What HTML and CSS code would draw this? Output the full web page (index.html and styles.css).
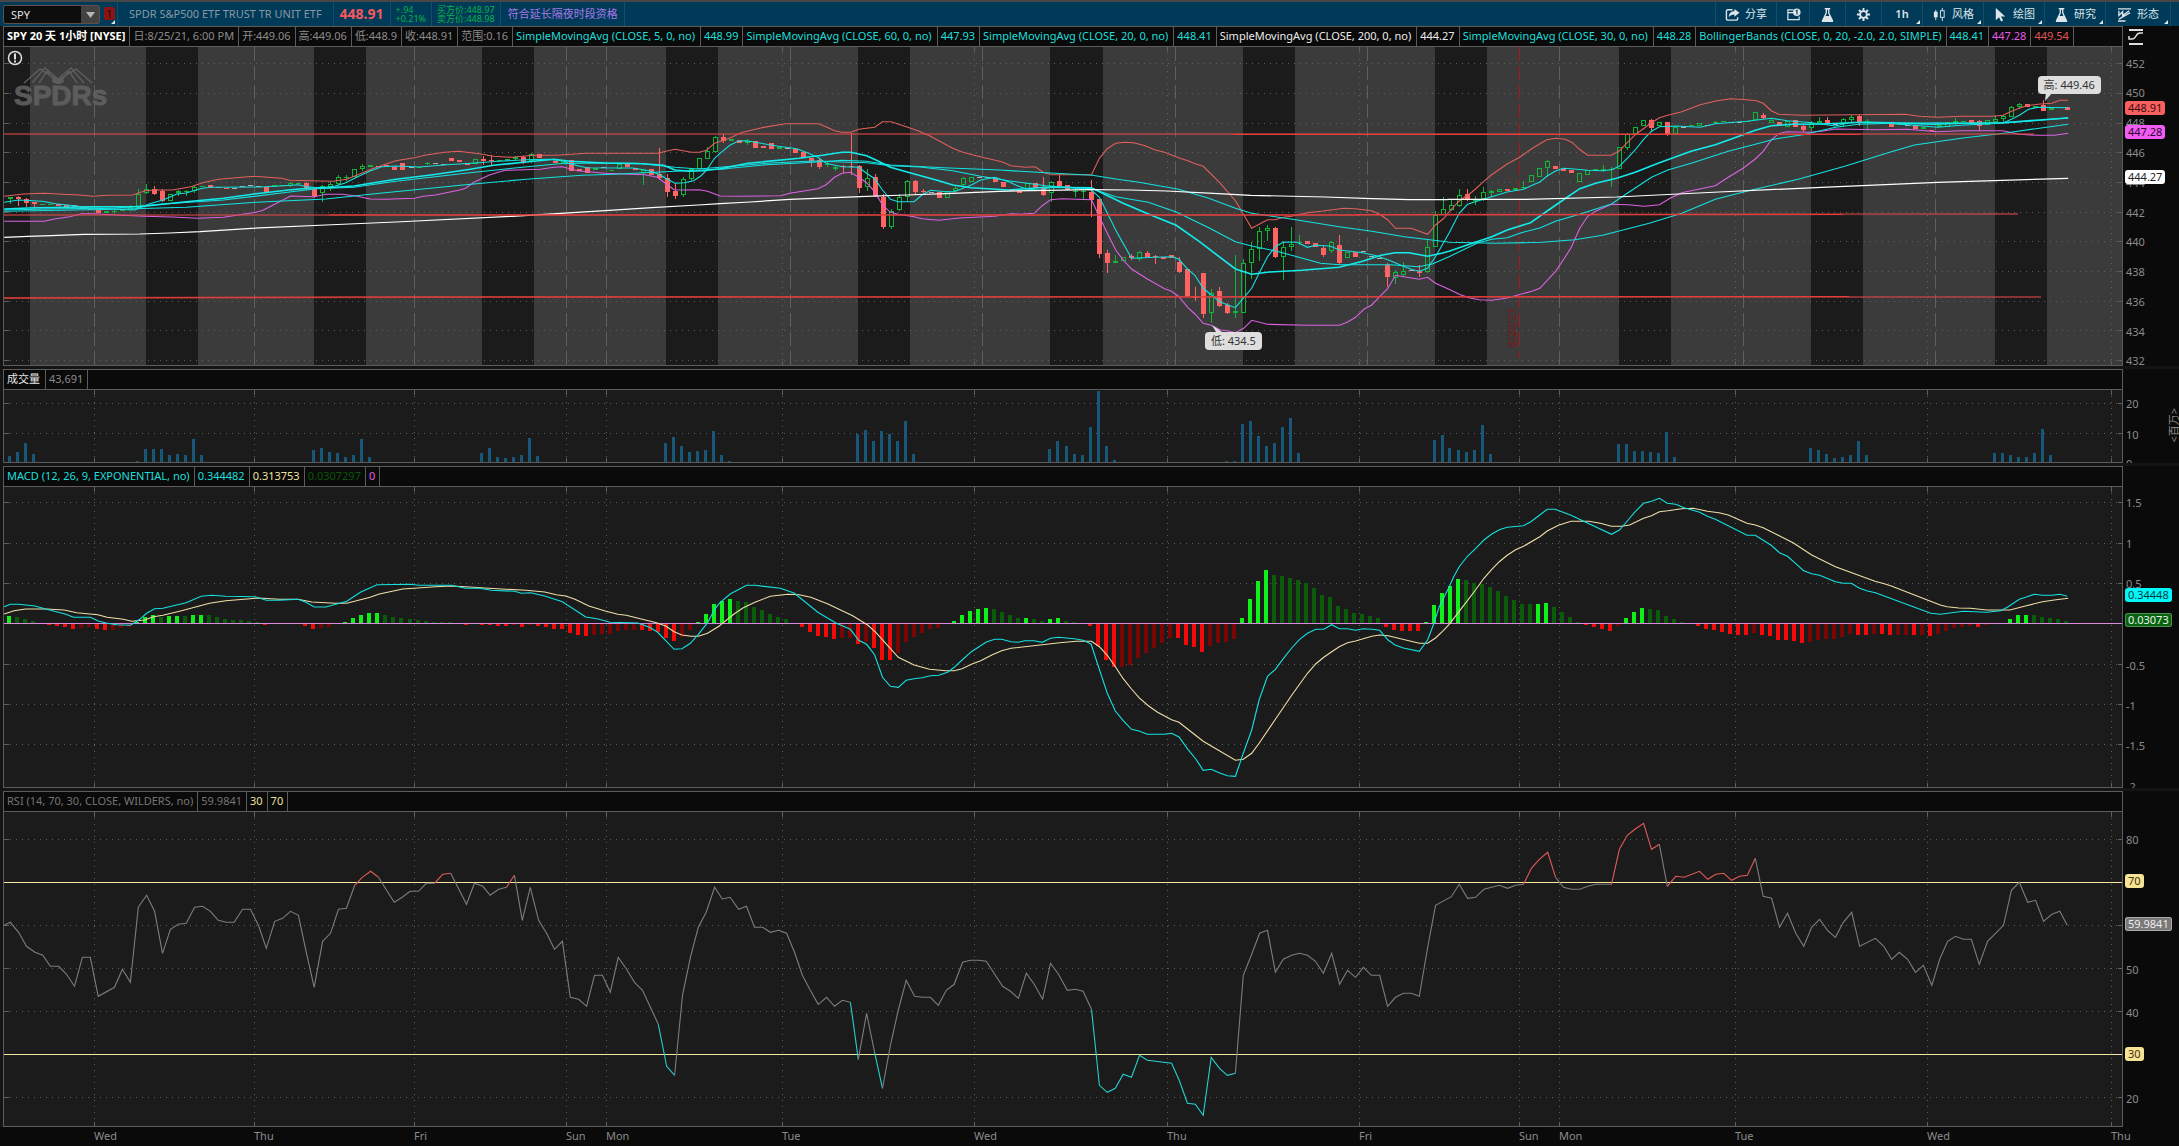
FILE: index.html
```html
<!DOCTYPE html>
<html lang="zh-CN">
<head>
<meta charset="utf-8">
<title>SPY 20 天 1小时</title>
<link rel="stylesheet" href="styles.css">
</head>
<body>
<header class="toolbar">
  <div class="symbol">
    <input class="symbol-input" type="text" value="SPY" aria-label="代码">
    <button class="symbol-arrow" type="button" aria-label="展开"><svg width="9" height="6" viewBox="0 0 9 6"><path d="M0 0h9L4.500 6z" fill="#b5b5b5"/></svg></button>
  </div>
  <div class="link more"><button class="link-badge" type="button">1</button></div>
  <div class="quote name">SPDR S&amp;P500 ETF TRUST TR UNIT ETF</div>
  <div class="quote last">448.91</div>
  <div class="quote pair change"><span>+.94</span><span>+0.21%</span></div>
  <div class="quote pair bidask"><span>买方价:448.97</span><span>卖方价:448.98</span></div>
  <div class="quote session">符合延长隔夜时段资格</div>
  <nav class="tools">
    <button class="tool wide" type="button"><svg class="icon" viewBox="0 0 16 16"><path d="M8 3H3a1.500 1.500 0 0 0-1.500 1.500v8A1.500 1.500 0 0 0 3 14h9a1.500 1.500 0 0 0 1.500-1.500V11" fill="none" stroke="#dde5ea" stroke-width="1.500"/><path d="M4 11c.3-4.500 2.500-6.500 6-6.500V2l5.500 4.200L10 10.500V8C7.500 8 5.500 8.800 4 11z" fill="#dde5ea"/></svg>分享</button>
    <button class="tool slim" type="button" aria-label="提醒"><svg class="icon" viewBox="0 0 16 16"><path d="M8 3H2v10.500h12V10M2 6h6" fill="none" stroke="#dde5ea" stroke-width="1.300"/><circle cx="11.500" cy="5.500" r="4" fill="#dde5ea"/><path d="M10.500 4.300l1.200-.8V8" fill="none" stroke="#003a59" stroke-width="1.200"/></svg></button>
    <button class="tool mid" type="button" aria-label="实验"><svg class="icon" viewBox="0 0 16 16"><path d="M5 1h6v1.500h-1V6l4 8.500V16H2v-1.500L6 6V2.500H5z" fill="#dde5ea"/><path d="M7.400 3v3.500L6 9.500h4L8.600 6.500V3z" fill="#003a59"/></svg></button>
    <button class="tool mid" type="button" aria-label="设置"><svg class="icon" viewBox="0 0 16 16"><path d="M8 1v14M1 8h14M3.200 3.200l9.600 9.600M12.800 3.200l-9.600 9.600" stroke="#dde5ea" stroke-width="2"/><circle cx="8" cy="8" r="4.500" fill="#dde5ea"/><circle cx="8" cy="8" r="2.600" fill="#003a59"/></svg></button>
    <button class="tool period more" type="button">1h</button>
    <button class="tool wide more" type="button"><svg class="icon" viewBox="0 0 16 16"><path d="M4 3v11M11 1v14" stroke="#dde5ea"/><rect x="2" y="5" width="4" height="6" fill="#dde5ea"/><rect x="9" y="4" width="4" height="7" fill="#003a59" stroke="#dde5ea"/></svg>风格</button>
    <button class="tool wide more" type="button"><svg class="icon" viewBox="0 0 16 16"><path d="M3 1l10 9H8.500l2.300 4.500-2.200 1L6.500 11 3 14z" fill="#dde5ea"/></svg>绘图</button>
    <button class="tool wide more" type="button"><svg class="icon" viewBox="0 0 16 16"><path d="M5 1h6v1.500h-1V6l4 8.500V16H2v-1.500L6 6V2.500H5z" fill="#dde5ea"/><path d="M7.400 3v3.500L6 9.500h4L8.600 6.500V3z" fill="#003a59"/></svg>研究</button>
    <button class="tool widest more" type="button"><svg class="icon" viewBox="0 0 16 16"><path d="M1 2h14M1 15h8" stroke="#dde5ea" stroke-width="1.500"/><path d="M2 4v5l4-4v4l7-5M2 13L14 6" fill="none" stroke="#dde5ea" stroke-width="1.400"/></svg>形态</button>
  </nav>
</header>

<main class="charts">
  <section class="pane price">
    <div class="legend">
      <b class="cell title">SPY 20 天 1小时 [NYSE]</b><span class="cell">日:8/25/21, 6:00 PM</span><span class="cell">开:449.06</span><span class="cell">高:449.06</span><span class="cell">低:448.9</span><span class="cell">收:448.91</span><span class="cell">范围:0.16</span><span class="cell study cyan">SimpleMovingAvg (CLOSE, 5, 0, no)</span><span class="cell cyan">448.99</span><span class="cell study cyan">SimpleMovingAvg (CLOSE, 60, 0, no)</span><span class="cell cyan">447.93</span><span class="cell study cyan">SimpleMovingAvg (CLOSE, 20, 0, no)</span><span class="cell cyan">448.41</span><span class="cell study white">SimpleMovingAvg (CLOSE, 200, 0, no)</span><span class="cell white">444.27</span><span class="cell study cyan">SimpleMovingAvg (CLOSE, 30, 0, no)</span><span class="cell cyan">448.28</span><span class="cell cyan">BollingerBands (CLOSE, 0, 20, -2.0, 2.0, SIMPLE)</span><span class="cell cyan">448.41</span><span class="cell magenta">447.28</span><span class="cell red">449.54</span>
    </div>
    <button class="scale-button" type="button" aria-label="坐标"><svg width="16" height="18" viewBox="0 0 16 18"><path d="M1 2h14M1 16h14" stroke="#ddd" stroke-width="2"/><path d="M1 8v3h3c5 0 3-6 8-6h3" fill="none" stroke="#ddd" stroke-width="1.500"/></svg></button>
    <div class="plot" id="price-plot">
      <div class="logo"><svg width="70" height="17" viewBox="0 0 70 17"><path d="M33 12L17 2 1 16M34 11L22 1 9 16M37 12L53 2 69 16M36 11L48 1 61 16M31 13L24 4 16 16M39 13L46 4 54 16" fill="none" stroke="#606060" stroke-width="1.500"/><ellipse cx="35" cy="14" rx="6" ry="3" fill="#606060"/></svg><span>SPDRs</span></div>
      <svg class="info" width="16" height="16" viewBox="0 0 16 16"><circle cx="8" cy="8" r="6.500" fill="none" stroke="#ddd" stroke-width="1.500"/><path d="M8 3.500v6M8 10.500v2" stroke="#ddd" stroke-width="2"/></svg>
      <span class="callout high">高: 449.46</span>
      <span class="callout low">低: 434.5</span>
      <span class="expiry">8/20/21</span>
    </div>
    <div class="axis" id="price-axis"></div>
  </section>
  <section class="pane volume">
    <div class="legend"><span class="cell study bright">成交量</span><span class="cell">43,691</span></div>
    <div class="plot" id="volume-plot"></div>
    <div class="axis" id="volume-axis"><span class="unit">&lt;百万&gt;</span></div>
  </section>
  <section class="pane macd">
    <div class="legend"><span class="cell cyan">MACD (12, 26, 9, EXPONENTIAL, no)</span><span class="cell cyan">0.344482</span><span class="cell cream">0.313753</span><span class="cell green">0.0307297</span><span class="cell magenta">0</span></div>
    <div class="plot" id="macd-plot"></div>
    <div class="axis" id="macd-axis"></div>
  </section>
  <section class="pane rsi">
    <div class="legend"><span class="cell dim">RSI (14, 70, 30, CLOSE, WILDERS, no)</span><span class="cell dim">59.9841</span><span class="cell cream">30</span><span class="cell cream">70</span></div>
    <div class="plot" id="rsi-plot"></div>
    <div class="axis" id="rsi-axis"></div>
  </section>
</main>
<footer class="days" id="days"></footer>
<script src="chart.js"></script>
</body>
</html>
```
FILE: styles.css
```css
* { box-sizing: border-box; }

body {
  margin: 0;
  min-height: 100vh;
  display: flex;
  flex-direction: column;
  background: #0a0a0a;
  border-top: 2px solid #474747;
  color: #8c8c8c;
  font: 11px/18px "Noto Sans", "Noto Sans CJK SC", sans-serif;
}

button, input { font: inherit; color: inherit; margin: 0; padding: 0; border: 0; background: none; }
svg { display: block; }

.toolbar { display: flex; flex: none; height: 24px; background: #003a59; padding: 0 8px 0 3px; white-space: nowrap; }
.symbol { display: flex; align-items: center; width: 97px; height: 19px; margin: 3px 3px 0 0; background: #0d0d0d; border: 1px solid #5d5148; border-radius: 2px; }
.symbol-input { flex: 1; min-width: 0; padding-left: 7px; color: #e0e0e0; }
.symbol-arrow { width: 18px; height: 17px; background: #424242; display: flex; align-items: center; justify-content: center; }
.link { position: relative; width: 14px; padding: 5px 0 0 1px; }
.link-badge { display: block; width: 11px; height: 13px; border-radius: 2px; background: #8c1414; color: #2c0505; line-height: 13px; }
.quote { display: flex; align-items: center; border-left: 1px solid #174c69; padding: 0 6px; }
.name { padding: 0 11px; color: #8798a2; }
.last { font-size: 14px; font-weight: 700; color: #f4595d; }
.pair { flex-direction: column; align-items: flex-start; justify-content: center; font-size: 9px; line-height: 9px; color: #0ab544; padding: 0 5px; }
.session { padding-left: 7px; color: #a679e6; border-right: 1px solid #174c69; }
.tools { display: flex; margin-left: auto; border-right: 1px solid #174c69; }
.tool { position: relative; display: flex; align-items: center; justify-content: center; gap: 5px; border-left: 1px solid #174c69; color: #dde5ea; }
.wide { width: 61px; }
.widest { width: 65px; }
.slim { width: 33px; }
.mid { width: 36px; }
.period { width: 41px; font-weight: 600; }
.icon { width: 15px; height: 15px; }
.more::after { content: ""; position: absolute; right: 2px; bottom: 2px; border: 2px solid #dde5ea; border-top-color: transparent; border-left-color: transparent; }

.charts { flex: 1; display: flex; flex-direction: column; gap: 3px; padding-left: 3px; background: #141414; }
.pane { display: grid; grid-template-columns: minmax(0, 1fr) 56px; grid-template-rows: 21px minmax(0, 1fr); min-height: 60px; background: #0a0a0a; }
.price { flex: 318 1 22px; }
.volume { flex: 72 1 22px; }
.macd { flex: 300 1 22px; }
.rsi { flex: 314 1 22px; }

.legend { grid-column: 1; display: flex; overflow: hidden; white-space: nowrap; border: 1px solid #5c5c5c; }
.cell { flex: none; border-right: 1px solid #5c5c5c; padding: 0 4px 0 3px; }
.study { padding-right: 5px; }
.title { color: #fff; }
.bright { color: #e8e8e8; }
.white { color: #ececec; }
.dim { color: #757575; }
.cyan { color: #1fdedb; }
.magenta { color: #e25ce8; }
.red { color: #e05656; }
.cream { color: #efe0a0; }
.green { color: #0b560b; }
.scale-button { grid-column: 2; padding-left: 5px; }

.plot { grid-column: 1; position: relative; overflow: hidden; background: #1b1b1b; border: solid #5c5c5c; border-width: 0 1px 1px; }
.plot > .canvas { position: absolute; inset: 0; width: 100%; height: 100%; }
.canvas path, .canvas line { vector-effect: non-scaling-stroke; fill: none; }
.canvas .solid { fill: currentColor; }

.axis { grid-column: 2; position: relative; overflow: hidden; }
.tick { position: absolute; left: 3px; transform: translateY(-50%); }
.tag { position: absolute; left: 2px; transform: translateY(-50%); padding: 0 3px; border-radius: 3px; line-height: 14px; z-index: 1; }
.tag-red { background: #fa5f5f; color: #3a1010; }
.tag-magenta { background: #f25cf5; color: #2b062c; }
.tag-white { background: #fff; color: #222; }
.tag-cyan { background: #00f8f8; color: #043c3c; }
.tag-green { background: #0a6110; color: #e8f5e8; box-shadow: inset 0 0 0 1px #4d8f50; }
.tag-cream { background: #f7e394; color: #3c3510; }
.tag-gray { background: #787878; color: #eee; box-shadow: inset 0 0 0 1px #aaa; }
.unit { position: absolute; right: -2px; top: 18px; line-height: 14px; writing-mode: vertical-rl; text-orientation: sideways; transform: rotate(180deg); white-space: nowrap; }

.logo { position: absolute; left: 10px; top: 20px; z-index: 1; color: #606060; font: 700 28px/24px "Liberation Sans", sans-serif; -webkit-text-stroke: 1px #606060; opacity: .9; }
.logo svg { margin-left: 9px; }
.logo span { display: block; }
.info { position: absolute; left: 3px; top: 3px; z-index: 1; }
.callout { position: absolute; z-index: 2; padding: 0 6px; border-radius: 4px; background: #dedede; color: #333; }
.high { right: 1%; top: 9%; }
.low { left: 56.700%; top: 89.500%; }
.expiry { position: absolute; z-index: 1; left: 70.900%; top: 82%; line-height: 12px; writing-mode: vertical-rl; transform: rotate(180deg); color: #7a1818; }

.days { position: relative; flex: none; height: 19px; margin: 0 57px 0 4px; }
.day { position: absolute; }
```
FILE: chart.js
```js
// Drawing space shared by all panes: x 4..2122, y counted from the window top.
const LEFT = 4, WIDTH = 2118;
const CYAN = '#14e2e2', GRID = '#5f5f5f';
const SVG = 'http://www.w3.org/2000/svg';

// Series are stored in three consecutive chunks, each on its own fine grid.
const CHUNK_X = [0, 720, 1449];
const px = (c, x) => (CHUNK_X[c] + x / 2.148).toFixed(1);
const barX = i => 10.3 + 8.004 * i;

function pane(id, top, height) {
  const svg = document.createElementNS(SVG, 'svg');
  svg.setAttribute('class', 'canvas');
  svg.setAttribute('viewBox', `${LEFT} ${top} ${WIDTH} ${height}`);
  svg.setAttribute('preserveAspectRatio', 'none');
  document.getElementById(id + '-plot').prepend(svg);
  const axis = document.getElementById(id + '-axis');
  const label = (text, y, cls) => {
    const s = document.createElement('span');
    s.className = cls || 'tick';
    s.textContent = text;
    s.style.top = ((y - top) / height * 100).toFixed(2) + '%';
    axis.append(s);
  };
  let out = '';
  return {
    top, bottom: top + height, label,
    rect(x, y, w, h, fill) { out += `<rect x="${x}" y="${y}" width="${w}" height="${h}" fill="${fill}"/>`; },
    path(d, color, width = 1, extra = '') { out += `<path d="${d}" stroke="${color}" stroke-width="${width}" ${extra}/>`; },
    crisp(d, color, extra = '') { this.path(d, color, 1, 'shape-rendering="crispEdges" ' + extra); },
    raw(s) { out += s; },
    done() { svg.innerHTML = out; }
  };
}

function points(chunks, dy) {
  return chunks.map((s, c) => s.trim().split(/\s+/).filter(Boolean).map(p => {
    const [x, y] = p.split(',').map(Number);
    return [px(c, x), (dy + y / 3).toFixed(1)];
  })).flat();
}
const series = (chunks, dy) => 'M' + points(chunks, dy).map(p => p.join(' ')).join('L');

const DAYS = [[94, 'Wed'], [254, 'Thu'], [414, 'Fri'], [566, 'Sun'], [606, 'Mon'], [782, 'Tue'], [974, 'Wed'],
  [1167, 'Thu'], [1359, 'Fri'], [1519, 'Sun'], [1559, 'Mon'], [1735, 'Tue'], [1927, 'Wed'], [2111, 'Thu']];

function grid(p, levels, columns) {
  for (const y of levels) {
    p.crisp(`M${LEFT} ${y}.5H${LEFT + WIDTH}`, GRID, 'stroke-dasharray="1 5"');
    p.crisp(`M${LEFT} ${y}.5h5M${LEFT + WIDTH - 4} ${y}.5h4`, GRID);
  }
  for (const x of columns) {
    p.crisp(`M${x}.5 ${p.top}V${p.bottom}`, GRID, 'stroke-dasharray="1 5"');
    p.crisp(`M${x}.5 ${p.top}v5M${x}.5 ${p.bottom - 4}v4`, GRID);
  }
}

/* ---------- price ---------- */
{
  const p = pane('price', 47, 318);
  p.rect(4, 47, 2118, 318, '#3b3b3b');
  [[4, 30], [146, 198], [314, 366], [482, 534], [666, 718], [858, 910], [1050, 1103], [1243, 1295], [1435, 1487],
    [1619, 1671], [1811, 1863], [1995, 2047]].forEach(([a, b]) => p.rect(a, 47, b - a, 318, '#1b1b1b'));
  grid(p, [63, 93, 123, 152, 182, 212, 241, 271, 301, 330, 360], [782, 974, 1167, 1359, 1735, 1927, 2111]);
  [94, 254, 414, 566, 606, 790, 982, 1175, 1367, 1559, 1743, 1935].forEach(x => p.crisp(`M${x}.5 47V365`, '#606060', 'stroke-dasharray="14 5"'));
  p.crisp('M1519.500 47V358', '#a81818', 'stroke-dasharray="14 5"');

  // Bollinger bands
  const upper = ['9,319 50,312 95,310 135,313 170,315 200,319 230,316 285,315 310,303 330,300 370,300 410,290 435,278 470,268 545,259 605,265 622,271 715,274 745,268 800,236 850,212 890,203 915,195 955,187 985,184 1030,191 1060,199 1100,202 1145,196 1195,196 1260,190 1414,190 1430,184 1450,178 1485,187 1502,187 1517,181 1535,160',
    '10,150 25,142 45,128 90,113 140,101 212,101 230,112 246,122 262,127 281,127 298,118 332,112 349,95 368,95 400,110 425,122 450,137 470,152 500,175 520,186 550,197 605,215 625,227 655,232 677,230 694,247 712,254 798,254 815,205 832,176 850,160 870,157 888,158 910,166 935,180 955,187 985,203 1005,212 1022,222 1038,229 1073,277 1107,332 1142,415 1176,389 1193,389 1210,382 1228,379 1262,368 1296,363 1340,355 1365,356 1400,362 1417,373 1434,389 1451,415 1485,415 1520,433 1537,405 1555,385',
    '0,366 20,335 50,305 75,274 90,256 125,222 150,203 180,174 210,149 230,145 250,148 265,158 280,178 298,196 349,196 366,182 383,158 400,134 435,98 452,83 470,76 500,65 540,44 575,32 605,26 640,29 660,32 675,40 692,62 708,73 760,76 980,73 1010,79 1050,82 1100,79 1170,79 1190,76 1208,64 1225,55 1240,47 1270,42 1295,40 1312,31 1330,31'];
  const lower = ['9,394 95,394 120,386 150,380 175,371 200,371 250,375 310,379 370,381 425,385 480,382 550,367 565,361 590,343 624,318 675,320 700,313 735,313 765,318 795,327 830,328 890,325 910,319 935,315 985,301 1000,295 1019,276 1050,256 1070,247 1085,241 1160,238 1190,232 1208,230 1240,242 1300,250 1385,254 1412,262 1425,275 1448,299 1470,300 1502,299 1520,304 1540,314',
    '0,318 45,319 130,317 150,310 210,296 228,284 246,262 262,250 280,247 298,262 315,278 332,305 349,345 366,367 383,373 417,380 434,386 470,391 515,384 590,379 625,371 645,373 675,370 692,347 710,329 735,326 798,329 815,380 832,430 850,480 866,510 884,537 918,567 955,596 970,604 986,620 1005,653 1020,672 1038,700 1055,706 1075,720 1090,722 1107,728 1125,715 1142,691 1176,703 1262,706 1331,706 1348,696 1365,682 1383,658 1400,645 1417,620 1434,596 1451,556 1468,560 1502,568 1520,562 1537,580',
    '0,598 22,613 45,624 65,629 92,631 125,624 150,614 180,603 195,595 229,544 250,500 262,473 281,415 298,379 315,364 349,343 385,344 420,349 452,344 475,325 500,308 540,296 572,287 600,262 630,236 658,207 675,184 692,150 708,131 725,125 775,127 800,124 830,117 915,119 985,118 1050,125 1100,122 1190,122 1225,133 1265,136 1300,136 1330,130'];
  // Moving averages
  const sma5 = ['9,337 40,330 90,334 120,341 160,347 190,353 240,357 290,360 320,342 350,330 380,312 400,309 430,296 450,292 560,291 610,287 640,284 660,290 690,295 720,288 740,280 775,256 795,243 820,230 850,228 900,231 960,224 1020,219 1070,214 1130,209 1180,208 1210,213 1225,222 1260,233 1330,234 1360,234 1395,242 1415,253 1430,265 1450,280 1470,278 1490,272 1505,258 1517,242 1535,205',
    '0,190 22,165 40,153 57,152 125,169 165,176 190,190 210,202 228,220 262,230 298,232 315,250 332,266 349,300 366,328 383,335 417,335 434,315 452,301 486,305 503,305 540,285 560,270 590,262 620,275 640,288 660,298 690,301 710,290 750,293 780,297 798,300 815,322 850,420 884,505 935,502 970,500 986,508 1003,535 1020,556 1038,595 1055,614 1073,635 1107,653 1142,595 1158,550 1176,500 1193,470 1210,456 1240,457 1262,472 1280,466 1310,468 1331,480 1380,488 1410,497 1440,512 1468,529 1485,538 1502,544 1520,535 1537,500',
    '0,430 22,370 40,343 60,334 92,320 125,306 160,298 180,285 195,276 211,258 228,244 245,235 262,236 298,241 330,242 349,239 366,229 383,205 400,180 418,148 435,124 452,110 487,108 540,112 572,101 640,94 692,85 727,92 779,98 830,108 865,97 930,99 985,104 1050,112 1100,106 1190,99 1208,88 1225,76 1245,58 1265,52 1330,53'];
  const sma20 = ['9,357 60,354 200,350 300,350 400,335 480,325 550,311 620,300 675,293 720,292 760,288 850,268 930,254 1010,238 1060,226 1130,216 1190,208 1225,214 1300,219 1380,221 1425,226 1450,240 1480,244 1510,242',
    '0,236 60,220 170,205 220,196 262,187 281,187 315,197 335,210 366,232 400,245 470,272 500,285 540,293 620,300 700,292 798,293 815,305 866,340 920,372 980,406 1030,455 1107,537 1142,553 1180,546 1250,541 1330,532 1380,514 1420,496 1450,488 1480,488 1520,499 1550,490',
    '0,484 50,460 92,440 125,420 175,398 211,363 245,330 281,296 315,280 360,265 400,247 452,218 520,184 572,164 620,140 658,121 692,107 740,103 800,102 890,97 950,98 1040,103 1100,100 1190,98 1260,91 1330,84'];
  const sma30 = ['9,360 100,357 250,354 350,342 480,330 600,310 680,296 760,292 850,274 1000,250 1100,235 1200,221 1270,219 1370,220 1450,232 1500,237',
    '0,232 100,220 200,213 262,216 315,218 366,227 430,231 500,242 560,259 620,272 700,287 800,296 850,320 920,337 980,366 1050,413 1107,455 1142,468 1200,485 1290,520 1330,524 1440,524 1500,530 1530,522',
    '0,500 60,460 92,448 125,443 155,428 195,414 229,394 280,373 349,342 383,310 435,262 470,240 520,220 600,184 658,163 700,147 760,134 830,112 880,103 950,100 1050,98 1150,101 1200,98 1260,92 1330,83'];
  const sma60 = ['9,364 250,358 400,352 550,337 700,327 800,312 1000,284 1130,268 1250,256 1320,253 1450,244 1560,237',
    '0,238 100,224 200,217 262,211 315,214 366,225 480,233 600,240 700,248 800,256 850,267 900,277 985,298 1050,325 1107,355 1142,370 1230,388 1330,410 1400,424 1470,440 1560,455',
    '0,457 100,460 200,457 270,449 330,436 430,400 500,370 572,328 650,300 750,268 850,229 950,185 1000,165 1100,145 1200,128 1260,116 1330,103'];
  const sma200 = ['9,442 60,439 110,437 180,433 300,432 365,429 430,425 540,415 700,405 850,396 1100,379 1300,362 1400,353 1500,345',
    '0,341 65,336 150,328 300,320 400,315 500,310 600,304 700,301 798,299 880,300 960,303 1060,310 1140,316 1300,321 1400,326 1480,329 1560,329',
    '0,328 165,328 360,321 580,306 800,292 1050,277 1330,265'];

  // Candles: kind, body top, body bottom, high, low. r falling, g rising, d short rising, w unchanged.
  const candles = `g 322 327 320 343|r 321 328 318 349|r 328 339 324 350|r 337 342 336 353|d 343 344|d 342 344|r 342 349|r 346 350|r 344 350|r 351 355|r 356 360|r 360 369|d 363 368|d 363 364 359 373|g 358 362|g 352 361 346 364|g 312 353 297 357|g 297 308 282 312|r 297 311 288 314|r 302 332 298 337|g 312 332|g 304 310 300 318|g 303 306 299 318|g 290 304 285 308|d 289 292|r 285 294|r 291 295|r 293 296|w 295 296|w 288 290|w 286 288|w 289 290|r 292 305|g 286 292|g 286 289|g 280 288 276 292|g 280 282|r 280 298 276 301|r 298 318 294 323|g 289 310 285 337|g 283 290 276 303|g 262 282 256 288|g 261 264 256 274|g 238 261|g 229 238 221 242|g 225 230|w 228 229|r 226 232|r 231 239|r 220 240|w 231 232|d 231 232|g 219 223 215 225|w 220 221|w 221 222|r 204 214|r 211 216|r 218 224|g 208 222|r 207 213 199 226|r 210 213 196 229|g 209 213|g 207 210|g 200 208 197 212|r 200 217 197 221|g 193 214 188 220|r 193 204|r 207 211|r 212 218|g 210 218|r 211 243|r 237 244|r 232 248|g 234 240|w 232 233|d 240 244|g 223 236|r 221 232|r 235 240|g 240 249 236 284|r 238 256|r 252 265 175 271|r 264 306 252 322|r 302 318 280 326|g 267 316 260 320|g 237 268 234 273|g 205 238|g 184 206 172 208|g 142 186 139 189|r 140 152 132 160
|d 148 152|r 151 160|g 153 160 148 166|r 153 174|r 168 173|r 160 178|d 170 177|w 174 175|r 176 188|r 186 205|r 205 213 203 230|r 209 230 206 238|d 223 226 212 232|d 230 236 226 242|r 228 232 226 250|r 229 232 128 256|r 228 293 226 308|g 263 292 236 304|r 262 319 252 322|r 320 410 312 418|g 362 412 358 418|g 320 360 312 364|g 274 320 270 336|r 272 305 270 315|r 303 307 298 310|w 306 307|r 305 323|g 302 325|g 294 302 286 305|g 265 284 262 288|g 262 276|w 262 263|w 262 263|r 264 276|r 276 292|r 296 304|r 303 308|g 280 304|r 280 293|r 290 314 262 318|g 275 310 272 336|r 274 288 254 290|r 285 300|g 302 304 296 320|d 303 307 290 326|r 306 330 270 380|r 328 491 326 504|r 489 519 480 550|d 514 519 494 520|g 500 513|r 498 504 492 510|g 487 508 484 512|r 490 500 482 502|r 499 502 494 522|r 500 506|r 496 504|r 516 545 500 548|r 538 619 536 622|r 620 624 590 632|r 549 672 548 684|g 608 670 598 698|r 602 648 590 650|r 646 668 640 672|g 662 668 494 684|g 520 668 508 670|g 478 520 456 566|g 424 478 410 512|g 414 424 406 452|r 414 502 412 505|g 470 502 456 570|g 462 472 410 484|d 456 460 434 466|r 453 462|r 459 472|r 473 496 468 502|g 456 484 452 488|r 466 520 434 522|g 486 503|r 486 502|w 484 485|w 497 498|w 505 506|r 524 560 520 590|g 547 564 540 583|g 542 556 516 560|w 540 541|r 542 549 524 562|g 472 545 450 548|g 375 470 362 472|g 358 374 322 376
|g 345 360 330 362|g 314 348 298 352|r 312 330 298 334|d 330 334 318 346|g 307 328 290 332|g 302 308 300 322|g 298 306|r 297 302|g 293 300|d 290 293 272 296|g 256 275|g 233 260|g 212 234 210 262|r 229 236|r 238 244|r 240 248|g 248 276|g 241 254|d 238 240|d 237 239 226 246|g 236 240 232 292|g 172 236|g 132 174 130 180|g 110 132|g 91 108|r 91 113 88 124|g 97 109|r 97 134 96 138|g 110 133|w 110 111|g 104 109|g 100 108|w 104 105|g 95 98 94 103|d 94 96|w 97 98|w 95 96|d 92 94|g 67 90|r 75 84 68 88|g 90 98 84 100|r 95 108|g 94 110|r 91 110|r 108 120 106 127|g 98 115 94 122|g 92 98 80 100|r 91 98 82 104|w 103 104|g 88 102 84 110|g 80 90 76 96|r 78 96 74 108|d 92 100 86 120|w 96 97|w 98 99|r 100 110|d 103 106|w 104 105|r 104 118|g 111 116|r 120 124|g 105 110|g 96 110|g 92 98 84 104|d 94 97|r 90 98|r 94 108 90 122|g 90 106|g 86 96 76 98|g 78 86 74 96|g 52 80 48 82|g 43 52 38 56|r 42 52|d 48 54|r 46 62 30 64|d 54 60|d 52 55|r 50 60`.split('|');
  candles.forEach((c, i) => {
    const [k, ...n] = c.trim().split(' ');
    const [t, b, h, l] = n.map(v => Math.round(90 + v / 3));
    const x = Math.round(barX(i));
    const color = k === 'r' ? '#ff6464' : k === 'w' ? '#b0b0b0' : '#12b53a';
    const hgt = Math.max(1, b - t);
    if (h) p.rect(x, h, 1, Math.max(0, t - h), color), p.rect(x, b, 1, Math.max(0, l - b), color);
    if (k === 'g' && hgt > 2) p.crisp(`M${x - 1.5} ${t + .5}h4v${hgt - 1}h-4z`, color);
    else p.rect(x - 2, t, 5, k === 'd' ? Math.min(2, hgt) : hgt, color);
  });

  p.path(series(upper, 90), '#e0605c', 1.1);
  p.path(series(lower, 90), '#dc62e2', 1.1);
  p.path(series(sma60, 90), CYAN, 1.1);
  p.path(series(sma30, 90), CYAN, 1.1);
  p.path(series(sma20, 90), '#14ecec', 1.6);
  p.path(series(sma5, 90), CYAN, 1.1);
  p.path(series(sma200, 90), '#fff', 1.2);

  // Support and resistance lines
  p.raw('<g opacity=".55">');
  p.path('M4 134H2034', '#e04848', 2);
  p.path('M4 215H1360L2018 214', '#e04848', 2);
  p.path('M4 298L438 297H1900L2041 297', '#e04848', 2);
  p.raw('</g>');
  p.path('M1233 134.500H1860M329 215H1360M1356 214.500H1843M4 298L400 297L1849 296.500', '#e83c3c', 1);
  // Callout pointers
  p.raw('<path class="solid" color="#dedede" d="M2046 92h7l-8 9z"/><path class="solid" color="#dedede" d="M1212 325l4 7h6z"/>');
  p.done();

  [452, 450, 448, 446, 444, 442, 440, 438, 436, 434, 432].forEach((v, i) => p.label(v, 63.5 + 29.7 * i));
  p.label('448.91', 108, 'tag tag-red');
  p.label('447.28', 132, 'tag tag-magenta');
  p.label('444.27', 177, 'tag tag-white');
}

/* ---------- volume ---------- */
{
  const p = pane('volume', 390, 72);
  grid(p, [403, 433], DAYS.map(d => d[0]));
  const bars = ['20:1098 38:1086 55:1059 72:1092 295:1113 312:1077 329:1077 347:1077 365:1095 382:1092 399:1095 416:1047 433:1095 673:1080 690:1074 708:1086 725:1089 742:1101 760:1095 777:1047 794:1101 1034:1089 1051:1074 1068:1101 1086:1104 1103:1101 1120:1095 1137:1044 1155:1098 1429:1059 1446:1041 1464:1068 1481:1086 1498:1083 1515:1080 1532:1023 1550:1095',
    '20:1113 295:1032 312:1020 330:1053 347:1023 364:1032 381:1053 398:993 416:1092 708:1077 725:1053 744:1068 761:1092 778:1095 795:1011 813:903 830:1068 847:1110 1088:1113 1105:1113 1122:1002 1139:993 1156:1038 1174:1068 1190:1059 1208:1011 1225:984 1242:1089 1535:1050 1552:1035',
    '2:1074 20:1080 38:1086 55:1080 72:1005 89:1092 364:1062 381:1062 398:1083 415:1083 433:1086 450:1089 467:1026 484:1101 776:1074 793:1080 811:1092 828:1104 845:1101 862:1095 880:1053 897:1095 1171:1089 1188:1089 1206:1095 1223:1101 1240:1101 1258:1089 1275:1017 1292:1095'];
  bars.forEach((s, c) => s.split(' ').forEach(b => {
    const [x, y] = b.split(':').map(Number);
    const top = Math.round(90 + y / 3);
    p.rect(Math.round(px(c, x) - 1.5), top, 3, 462 - top, '#17587a');
  }));
  p.done();
  p.label('20', 404); p.label('10', 434); p.label('0', 463);
}

/* ---------- MACD ---------- */
{
  const p = pane('macd', 487, 300);
  grid(p, [502, 543, 583, 664, 704, 744], DAYS.map(d => d[0]));
  // Histogram: G/g rising and fading above zero, R/r below zero; the number is the bar end.
  const hist = `G468 g471 g477 g483 g489 R495 R498 R500 R507 r503 r500 R507 R510 r510 r503 r500 G485 G471 G466 g470 G468 G468 g469 G465 G465 g465 g472 g477 g480 g481 g483 g486 R494 r492 r491 r491 r492 R497 R507 r503 r500 g489 G486 G474 G465 G459 G459 g465 g471 g474 g477 g481 g483 g486 g487 g487 g488 R495 r493 R495 R495 R498 R498 r494 R500 r494 R498 R500 R507 R507 R519 R525 R528 r525 r523 r522 r513 r511 r510 R510 R513 R516 R534 R543 r531 r510 G487 G462 G432 G424
G417 g423 g426 g441 g450 g462 g471 g477 g489 R501 R516 R528 R531 R537 r533 r534 R552 r545 R564 R600 R600 r579 r545 r531 r519 r507 r504 r493 G483 G465 G453 G447 G444 g447 g456 g465 g474 G474 g477 g483 G477 G474 g483 g487 g489 R498 R557 R600 R621 r621 r615 r594 r579 r564 r549 r534 R534 R555 R561 R576 r558 r549 r546 r537 G474 G417 G363 G330 g345 g348 g354 g360 g369 g384 g405 g411 g438 g447 g459 g462 g468 g474 R501 R510 R513 R513 R513 G486 G435 G399
G378 G357 g360 g369 g372 g381 g393 g408 g420 g432 g432 G432 G429 g441 g456 g471 g486 R494 R500 R507 R513 r497 G474 G456 G444 g447 g450 g468 g477 g486 r492 R498 R507 R510 R516 R522 R525 R525 r519 R525 R528 R540 R540 R543 R549 r546 r540 r537 r537 r531 r522 R525 R525 r521 R522 R525 r525 r525 R525 r524 R528 r522 r513 r504 r502 r499 R501 r495 r493 g489 G477 G465 G465 g465 g471 g474 g477 g483`.split(/\s+/);
  const tone = { G: '#0ff01a', g: '#0a5c0a', R: '#f50a0a', r: '#7a0505' };
  hist.forEach((s, i) => {
    const y = Math.round(460 + s.slice(1) / 3), zero = 623;
    p.rect(Math.round(barX(i)) - 3, Math.min(y, zero), 4, Math.max(1, Math.abs(y - zero)), tone[s[0]]);
  });
  p.crisp('M4 623.500H2122', '#d98be0');
  p.path(series(['9,462 30,452 55,447 100,447 138,450 165,458 210,464 230,472 265,478 283,484 310,480 330,470 350,466 390,452 450,430 485,422 555,414 600,418 640,418 670,426 720,430 745,430 795,412 815,402 835,396 865,387 935,380 970,378 1000,380 1050,385 1130,391 1170,396 1195,404 1215,408 1235,418 1265,438 1300,453 1327,463 1345,466 1410,488 1430,498 1448,515 1465,525 1485,529 1500,529 1520,520 1545,498',
    '0,496 30,462 50,443 75,427 108,409 145,403 170,404 195,412 232,432 285,467 318,496 335,518 383,592 417,615 450,628 485,632 503,632 520,626 540,613 560,602 585,584 605,572 625,565 730,548 765,544 798,544 815,560 832,586 850,622 866,656 884,687 900,713 920,737 940,757 970,779 986,787 1020,824 1038,844 1107,901 1124,898 1142,880 1158,850 1193,778 1228,706 1262,640 1280,611 1297,592 1314,575 1330,560 1348,548 1365,543 1400,529 1417,525 1435,527 1502,550 1520,550 1537,534 1552,514',
    '0,494 35,430 57,390 75,355 92,328 108,305 125,286 143,269 160,259 195,230 211,213 235,196 262,184 300,184 325,190 349,199 370,199 388,195 418,175 435,167 452,155 470,152 500,146 525,145 555,154 580,158 600,165 640,190 658,195 675,203 740,249 779,285 830,320 915,364 935,371 950,378 1055,435 1070,440 1095,444 1120,445 1155,450 1205,450 1240,437 1275,425 1300,420 1330,415'], 460), '#efdfa8', 1.1);
  p.path(series(['9,440 22,433 40,433 75,438 100,448 140,462 158,472 194,472 211,483 228,489 250,494 280,496 300,478 315,460 332,446 350,445 400,428 432,409 455,406 485,409 548,410 572,421 600,421 640,418 657,427 675,441 700,441 745,424 775,396 810,374 880,373 900,376 970,376 1000,385 1030,385 1055,391 1105,394 1120,400 1140,398 1170,408 1208,425 1258,471 1285,477 1310,487 1370,489 1395,502 1412,516 1448,568 1465,566 1483,550 1500,523 1520,488 1535,448',
    '0,428 22,402 57,376 75,376 130,385 160,400 210,457 250,490 280,508 298,541 315,553 332,584 349,652 366,679 383,682 400,661 417,656 434,653 452,647 470,646 490,636 503,622 520,600 540,575 572,546 590,538 605,538 625,545 640,547 655,542 675,542 692,547 710,535 727,532 765,537 780,541 797,552 832,700 849,753 866,782 884,808 900,813 918,823 955,823 970,820 986,831 1005,868 1022,897 1038,931 1055,928 1072,938 1090,947 1107,949 1124,880 1142,810 1158,720 1176,649 1193,628 1210,596 1228,564 1245,538 1262,520 1280,508 1297,508 1314,494 1330,506 1348,506 1365,511 1382,506 1400,508 1417,511 1435,540 1450,555 1468,564 1502,574 1520,540 1532,496 1545,440',
    '0,382 10,350 22,320 40,288 57,266 75,240 92,222 108,209 125,202 160,197 175,186 192,168 211,148 228,148 245,157 262,166 349,223 366,210 383,183 400,155 418,130 435,124 452,115 469,130 487,133 505,143 537,156 555,169 572,178 640,226 658,226 675,241 692,256 710,278 727,289 745,311 762,332 779,341 796,346 830,365 847,370 864,370 882,385 899,393 916,398 1035,460 1055,463 1105,454 1155,457 1185,452 1200,441 1225,418 1240,411 1257,403 1275,406 1295,406 1312,403 1328,409'], 460), CYAN, 1.1);
  p.done();
  [['1.5', 503], ['1', 544], ['0.5', 584], ['-0.5', 665], ['-1', 705], ['-1.5', 745], ['-2', 786]].forEach(([t, y]) => p.label(t, y));
  p.label('0.34448', 595, 'tag tag-cyan');
  p.label('0.03073', 620, 'tag tag-green');
}

/* ---------- RSI ---------- */
{
  const p = pane('rsi', 812, 314);
  grid(p, [839, 925, 968, 1011, 1097], DAYS.map(d => d[0]));
  p.crisp('M4 882.500H2122M4 1054.500H2122', '#f4e6a0');
  // "r" and "c" switch to the overbought and oversold colours, "n" back to normal.
  const rsi = ['9,406 22,397 40,427 57,469 75,487 92,496 108,529 126,529 143,553 160,589 177,502 194,502 211,619 246,592 263,538 280,577 297,352 315,316 332,364 349,490 366,418 383,403 400,400 418,352 435,349 452,364 469,391 486,397 503,397 521,358 538,358 555,406 572,475 590,394 607,385 624,364 641,376 658,487 675,592 693,454 710,430 727,358 744,355 762,286 r 778,262 796,244 813,262 n 830,300 847,337 864,322 881,304 899,304 916,280 933,280 r 951,253 968,250 n 985,296 1002,343 1019,280 1037,289 1053,316 1071,298 1088,292 r 1105,256 n 1122,391 1139,292 1157,391 1174,430 1191,478 1208,454 1225,622 1243,628 1260,649 1277,556 1294,556 1311,607 1328,502 1346,538 1363,577 1380,601 1397,652 1414,703 c 1432,829 1449,856 n 1466,616 1483,502 1500,412 1517,367 1535,292',
    '5,327 22,322 40,358 57,349 74,412 92,412 108,427 126,421 143,430 160,487 177,556 194,601 211,643 229,622 246,649 263,631 280,637 c 297,808 n 315,670 332,787 c 349,895 n 366,766 383,660 400,571 418,619 435,622 452,622 469,646 486,601 503,583 521,517 538,511 555,511 572,514 590,553 607,589 624,604 641,625 658,550 675,583 693,628 710,520 727,553 746,601 763,598 780,604 798,658 c 815,886 832,907 849,895 866,853 884,862 901,796 918,811 970,820 987,873 1004,940 1021,943 1038,976 1055,802 1073,835 1090,856 1107,850 n 1124,556 1142,493 1159,430 1176,421 1193,547 1210,508 1228,496 1245,490 1262,496 1279,514 1296,550 1314,490 1331,583 1348,541 1365,562 1382,532 1399,556 1417,556 1434,649 1451,622 1468,610 1485,610 1502,619 1519,480 1537,346',
    '5,320 22,283 40,325 57,322 75,298 108,286 126,295 143,286 160,283 r 177,235 194,208 212,187 229,262 n 246,292 263,298 281,298 298,289 315,283 349,283 r 366,178 383,136 400,117 418,100 435,178 452,163 n 469,289 r 487,259 505,262 538,244 556,268 573,253 590,250 607,271 624,259 641,256 658,205 n 675,319 693,325 710,412 727,370 745,430 762,469 779,412 796,388 813,421 830,442 847,397 865,367 882,469 916,445 934,469 951,508 967,487 985,508 1002,547 1019,526 1037,586 1054,508 1071,454 1088,439 1105,448 1122,448 1139,523 1157,454 1191,406 1208,301 1225,277 1243,337 1260,331 1277,394 1295,373 1312,364 1328,406'];
  const color = { n: '#7d7d7d', r: '#e25a55', c: '#25d0d0' };
  let mode = 'n', run = [];
  rsi.forEach((s, c) => s.split(' ').forEach(t => {
    if (color[t]) {
      p.path('M' + run.join('L'), color[mode], 1.1);
      run = run.slice(-1);
      mode = t;
    } else {
      const [x, y] = t.split(',').map(Number);
      run.push(`${px(c, x)} ${(790 + y / 3).toFixed(1)}`);
    }
  }));
  p.path('M' + run.join('L'), color[mode], 1.1);
  p.done();
  [['80', 840], ['50', 969], ['40', 1012], ['20', 1098]].forEach(([t, y]) => p.label(t, y));
  p.label('70', 881, 'tag tag-cream');
  p.label('59.9841', 924, 'tag tag-gray');
  p.label('30', 1053, 'tag tag-cream');
}

DAYS.forEach(([x, text]) => {
  const s = document.createElement('span');
  s.className = 'day';
  s.textContent = text;
  s.style.left = ((x - LEFT) / WIDTH * 100).toFixed(3) + '%';
  document.getElementById('days').append(s);
});
```
